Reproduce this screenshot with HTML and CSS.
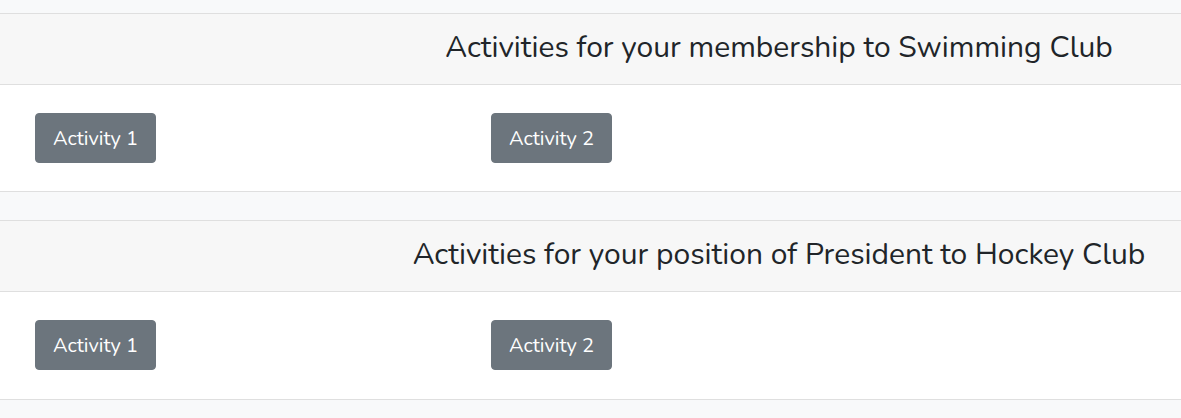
FILE: index.html
```html
<!DOCTYPE html>
<html lang="en">
<head>
<meta charset="utf-8">
<title>Activities</title>
<link rel="stylesheet" href="styles.css">
</head>
<body>
<main class="page">
  <section class="card">
    <header class="card-header">
      <h3 class="card-title">Activities for your membership to Swimming Club</h3>
    </header>
    <div class="card-body">
      <div class="activity-col"><button class="btn" type="button">Activity 1</button></div>
      <div class="activity-col"><button class="btn" type="button">Activity 2</button></div>
    </div>
  </section>
  <section class="card">
    <header class="card-header">
      <h3 class="card-title">Activities for your position of President to Hockey Club</h3>
    </header>
    <div class="card-body">
      <div class="activity-col"><button class="btn" type="button">Activity 1</button></div>
      <div class="activity-col"><button class="btn" type="button">Activity 2</button></div>
    </div>
  </section>
</main>
</body>
</html>
```

FILE: styles.css
```css
html, body {
  margin: 0;
  padding: 0;
}
body {
  background: #f8f9fa;
  color: #212529;
  font-family: "Nunito", "Open Sans", "Liberation Sans", sans-serif;
  width: 1181px;
  height: 418px;
  overflow: hidden;
}
.page {
  padding-top: 13px;
  display: flex;
  flex-direction: column;
  gap: 28px;
}
.card {
  background: #fff;
  border-top: 1px solid #dfdfdf;
  border-bottom: 1px solid #dfdfdf;
}
.card-header {
  background: #f7f7f7;
  border-bottom: 1px solid #dfdfdf;
  height: 70px;
  display: grid;
  grid-template-columns: 377px 1fr;
  align-items: center;
}
.card-title {
  grid-column: 2;
  margin: 0;
  text-align: center;
  font-weight: 400;
  font-size: 30px;
  line-height: 1.2;
  padding-bottom: 3px;
}
.card-body {
  height: 106px;
  padding: 28px 0 0 35px;
  display: grid;
  grid-template-columns: 456px 456px;
  align-items: start;
  box-sizing: border-box;
}
.card:last-child .card-body {
  height: 107px;
}
.btn {
  display: block;
  height: 50px;
  width: 121px;
  background: #6c757d;
  color: #fff;
  border: 1px solid #6c757d;
  border-radius: 4px;
  font-family: inherit;
  font-size: 20px;
  padding: 0;
  cursor: pointer;
}
```
